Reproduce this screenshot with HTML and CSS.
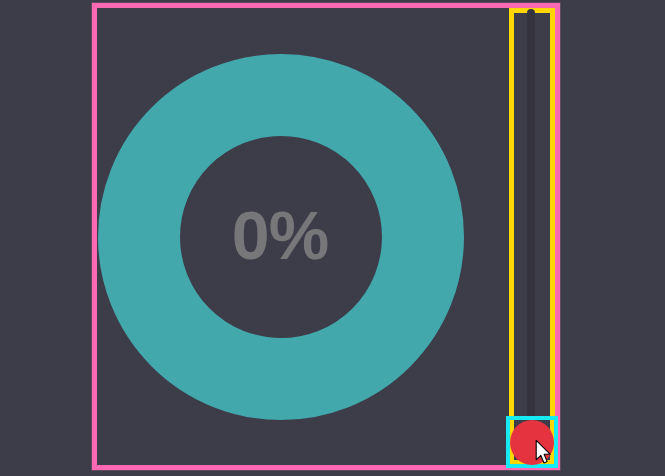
FILE: index.html
```html
<!DOCTYPE html>
<html lang="en">
<head>
<meta charset="utf-8">
<title>Progress slider</title>
<link rel="stylesheet" href="styles.css">
</head>
<body>
  <div class="panel">
    <div class="donut">
      <span class="value">0%</span>
    </div>
    <div class="slider">
      <div class="track"></div>
      <div class="thumb"><div class="knob"></div></div>
    </div>
  </div>
  <svg class="cursor" width="17" height="27" viewBox="0 0 14 22">
    <path d="M1 1 L1 17 L4.8 13.4 L7.4 19.6 L10 18.5 L7.5 12.5 L12.6 12.5 Z" fill="#fff" stroke="#000" stroke-width="0.9" stroke-linejoin="round"/>
  </svg>
</body>
</html>
```

FILE: styles.css
```css
html, body {
  margin: 0;
  padding: 0;
}
body {
  width: 665px;
  height: 476px;
  background: #3d3c49;
  font-family: "Liberation Sans", Arial, sans-serif;
  overflow: hidden;
  position: relative;
}
.panel {
  box-sizing: border-box;
  margin: 3px 0 0 92px;
  width: 468px;
  height: 467px;
  border: 5px solid #ff69b4;
  box-shadow: 0 0 0 1px rgba(255, 140, 200, 0.18);
  display: flex;
  align-items: center;
  padding-left: 1px;
}
.donut {
  box-sizing: border-box;
  width: 366px;
  height: 366px;
  border-radius: 50%;
  border: 82px solid #42a8ac;
  display: flex;
  align-items: center;
  justify-content: center;
  flex: none;
}
.value {
  color: #777779;
  font-weight: bold;
  font-size: 68px;
  letter-spacing: -1px;
  margin-left: -2px;
  margin-top: -3px;
}
.slider {
  box-sizing: border-box;
  margin-left: auto;
  width: 46px;
  align-self: stretch;
  border: 5px solid #ffd700;
  position: relative;
}
.track {
  position: absolute;
  left: 13px;
  top: -4px;
  bottom: 20px;
  width: 8px;
  border-radius: 4px 4px 0 0;
  background: #34333e;
}
.thumb {
  position: absolute;
  box-sizing: border-box;
  left: -8px;
  bottom: -8px;
  width: 52px;
  height: 52px;
  border: 4px solid #16eaf2;
  display: flex;
  align-items: center;
  justify-content: center;
}
.knob {
  width: 45px;
  height: 45px;
  border-radius: 50%;
  background: #e53340;
}
.cursor {
  position: absolute;
  left: 535px;
  top: 439px;
}
```
